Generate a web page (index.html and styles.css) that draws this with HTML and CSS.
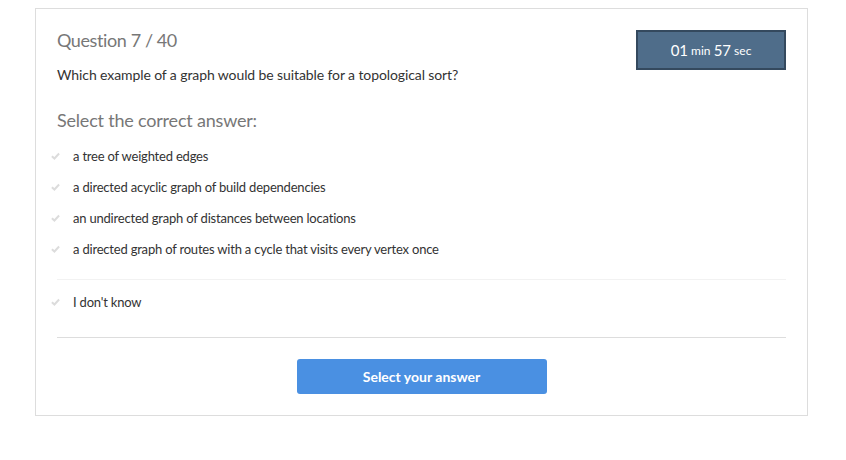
FILE: index.html
```html
<!DOCTYPE html>
<html>
<head>
<meta charset="utf-8">
<link rel="stylesheet" href="styles.css">
</head>
<body>
<div class="page">
  <div class="card">
    <div class="top">
      <div class="qinfo">
        <h2 class="qnum">Question 7 / 40</h2>
        <p class="qtext">Which example of a graph would be suitable for a topological sort?</p>
      </div>
      <div class="timer"><span class="big">01</span> min <span class="big">57</span> sec</div>
    </div>
    <h3 class="prompt">Select the correct answer:</h3>
    <ul class="options">
      <li class="opt"><svg class="chk" viewBox="0 0 10 8"><path d="M1 4.2 L3.8 6.8 L9 1.2" fill="none" stroke="#dcdcdc" stroke-width="2.2"/></svg><span>a tree of weighted edges</span></li>
      <li class="opt"><svg class="chk" viewBox="0 0 10 8"><path d="M1 4.2 L3.8 6.8 L9 1.2" fill="none" stroke="#dcdcdc" stroke-width="2.2"/></svg><span>a directed acyclic graph of build dependencies</span></li>
      <li class="opt"><svg class="chk" viewBox="0 0 10 8"><path d="M1 4.2 L3.8 6.8 L9 1.2" fill="none" stroke="#dcdcdc" stroke-width="2.2"/></svg><span>an undirected graph of distances between locations</span></li>
      <li class="opt"><svg class="chk" viewBox="0 0 10 8"><path d="M1 4.2 L3.8 6.8 L9 1.2" fill="none" stroke="#dcdcdc" stroke-width="2.2"/></svg><span>a directed graph of routes with a cycle that visits every vertex once</span></li>
    </ul>
    <div class="sep light"></div>
    <ul class="options idk">
      <li class="opt"><svg class="chk" viewBox="0 0 10 8"><path d="M1 4.2 L3.8 6.8 L9 1.2" fill="none" stroke="#dcdcdc" stroke-width="2.2"/></svg><span>I don't know</span></li>
    </ul>
    <div class="sep dark"></div>
    <div class="actions">
      <button class="submit">Select your answer</button>
    </div>
  </div>
</div>
</body>
</html>
```
FILE: styles.css
```css
* { box-sizing: border-box; }
body {
  margin: 0;
  background: #fff;
  font-family: Lato, "Open Sans", sans-serif;
  color: #333;
}
.page {
  padding: 8px 0 0 35px;
}
.card {
  width: 773px;
  height: 408px;
  border: 1px solid #dddddd;
  padding: 18px 21px 0 21px;
}
.top {
  display: flex;
  justify-content: space-between;
  align-items: flex-start;
}
.qnum {
  margin: 0;
  font-size: 18px;
  font-weight: 400;
  color: #777;
  line-height: 26px;
  letter-spacing: -0.4px;
}
.qtext {
  margin: 13px 0 0 0;
  font-size: 14px;
  line-height: 18px;
  color: #333;
  letter-spacing: -0.1px;
}
.timer {
  margin-top: 3px;
  width: 150px;
  height: 40px;
  background: #4f6d8a;
  border: 2px solid #34495e;
  color: #fff;
  font-size: 12px;
  display: flex;
  align-items: center;
  justify-content: center;
  white-space: pre;
}
.timer .big { font-size: 15px; }
.prompt {
  margin: 23px 0 0 0;
  font-size: 18px;
  font-weight: 400;
  color: #777;
  line-height: 26px;
  letter-spacing: -0.2px;
}
.options {
  list-style: none;
  margin: 7px 0 0 -6px;
  padding: 0;
}
.opt {
  display: flex;
  align-items: center;
  height: 31px;
  font-size: 13px;
  color: #333;
  letter-spacing: -0.2px;
}
.chk {
  width: 9px;
  height: 8px;
  margin-right: 13px;
  flex: none;
}
.sep { height: 1px; }
.sep.light { background: #f2f2f2; margin-top: 15px; }
.sep.dark { background: #dddddd; margin-top: 20px; }
.options.idk { margin-top: 6px; }
.actions {
  display: flex;
  justify-content: center;
  padding-top: 21px;
}
.submit {
  width: 250px;
  height: 35px;
  border: none;
  border-radius: 3px;
  background: #4a90e2;
  color: #fff;
  font-family: Lato, sans-serif;
  font-weight: 700;
  font-size: 14px;
}
```
